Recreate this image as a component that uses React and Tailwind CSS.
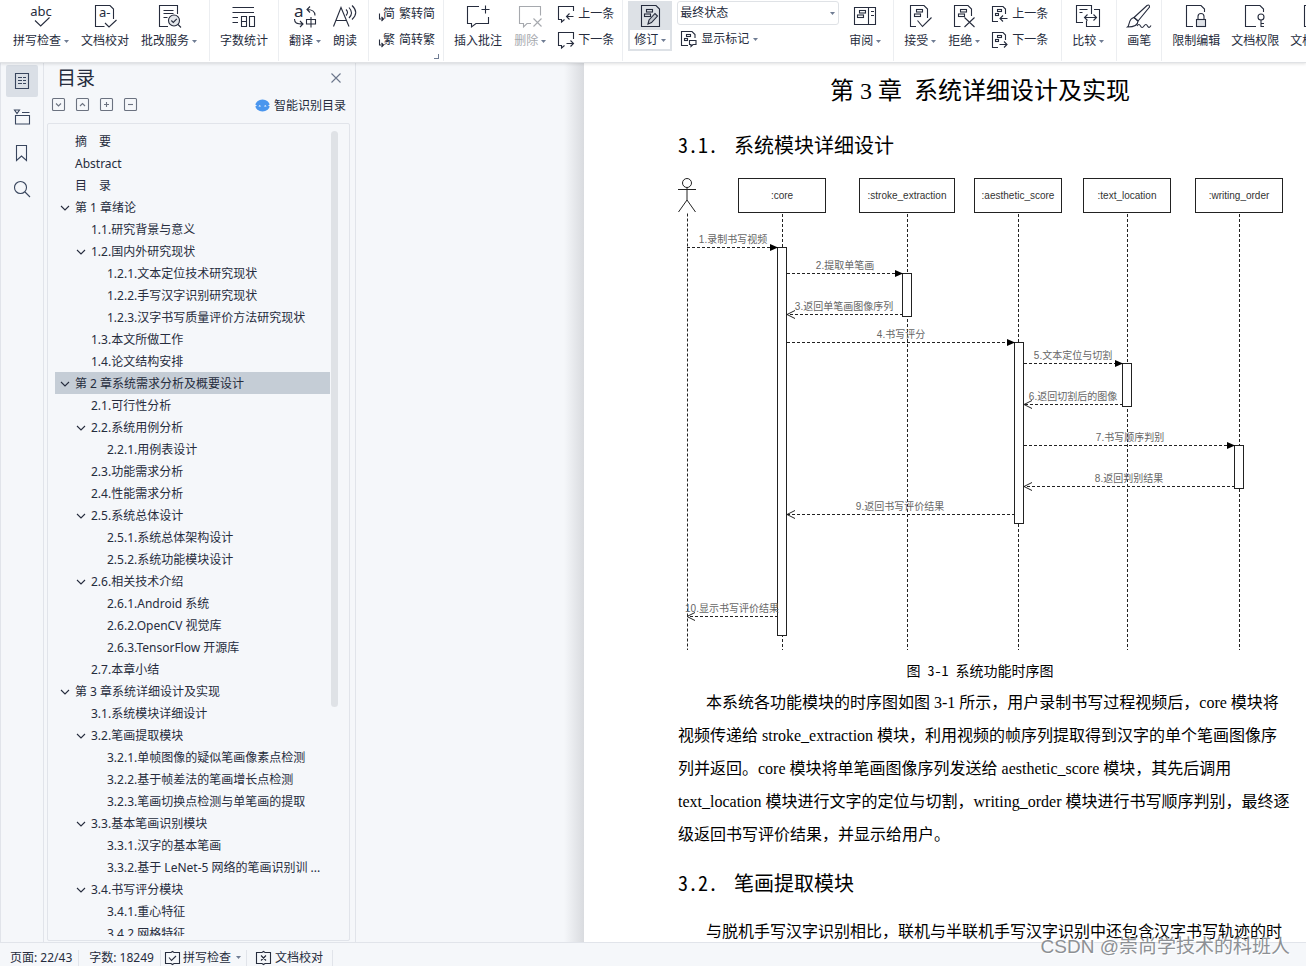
import React from "react";

const UI = "font-['Noto_Sans','Noto_Sans_CJK_SC',sans-serif]";
const HEI = "font-['Noto_Sans_Mono_CJK_SC','Noto_Sans_CJK_SC',sans-serif]";
const SONG = "font-['Liberation_Serif','Noto_Sans_CJK_SC',serif]";

function Svg({ s = 24, h, children, className = "" }) {
  return (
    <svg
      width={s}
      height={h || s}
      viewBox={`0 0 ${s} ${h || s}`}
      fill="none"
      stroke="currentColor"
      strokeWidth="1.1"
      className={`shrink-0 overflow-visible ${className}`}
      aria-hidden="true"
    >
      {children}
    </svg>
  );
}

const Caret = ({ className = "text-[#6f7c93]" }) => (
  <svg width="5" height="3" viewBox="0 0 5 3" className={`shrink-0 ${className}`} aria-hidden="true">
    <path d="M0 0h5L2.5 3z" fill="currentColor" />
  </svg>
);

const Bars = () => (
  <g>
    <rect x="8.5" y="5.5" width="6" height="2.5" />
    <rect x="6.5" y="10" width="6" height="2.5" />
  </g>
);

const SmallBars = () => (
  <g>
    <rect x="5.5" y="3.5" width="4" height="2" />
    <rect x="3.5" y="7.5" width="3" height="2" />
  </g>
);

const icons = {
  spell: (
    <Svg>
      <text x="12" y="12" textAnchor="middle" fontSize="13" fill="currentColor" stroke="none">abc</text>
      <path d="M6 16.500l5.700 5.500L20.500 13.500" />
    </Svg>
  ),
  proof: (
    <Svg>
      <path d="M11.500 22.500h-9v-21H17L20.500 5v10" />
      <text x="6" y="13" fontSize="13" fill="currentColor" stroke="none">a-</text>
      <path d="M12 19l4 4 7.500-7" />
    </Svg>
  ),
  service: (
    <Svg>
      <path d="M11 22.500H2.500v-21h18V10M6.500 6.500h10M6.500 9.500h10M6.500 13.500h4" />
      <circle cx="17" cy="16.500" r="5.500" fill="#e3e6ea" />
      <path d="M14.300 16.500l2 2 3.500-3.700M21 20.500l3 3" />
    </Svg>
  ),
  count: (
    <Svg>
      <path d="M.5 3.500H22M.5 8.500H22M.5 13.500h5.500M.5 18.500h5.500" />
      <path d="M9.500 12.500h5v10h-5zM9.500 17.500h5M17.500 12.500h5v10h-5z" />
    </Svg>
  ),
  translate: (
    <Svg>
      <text x="1" y="13" fontSize="17" fill="currentColor" stroke="none">a</text>
      <path d="M22 11.500C22 7 19 5.500 14 5.500M17 2.500l-3 3 3 3M1.500 15c0 4 2 5 8.500 5M7 17l3 3-3 3" />
      <path d="M13.500 15.500h9v4.500h-9zM18 13v10.500" />
    </Svg>
  ),
  read: (
    <Svg>
      <path d="M.5 22.500L8 3.500l8 19M3 16.500h10.500M13 5.500q3 3 0 6M16 3.500q5 5.500 0 10.500M19 1.500q7.500 7 0 14" />
    </Svg>
  ),
  insert: (
    <Svg>
      <path d="M13 2.500H1.500v17h4V23L10 19.500h12.500V13M19.500 1.500v8M15.500 5.500h8" />
    </Svg>
  ),
  remove: (
    <Svg>
      <path d="M22.500 11.500v-9h-21v17h4V23L9 19.500h4M15.500 14.500l8 8M23.500 14.500l-8 8" />
    </Svg>
  ),
  prevNote: (
    <Svg s={16}>
      <path d="M15.500 5V.5H.5v13h3V16l3-2.500M15.500 10.500h-7M11.500 7.500l-3 3 3 3" />
    </Svg>
  ),
  nextNote: (
    <Svg s={16}>
      <path d="M15.500 7V.5H.5v13h3V16l3-2.500M8.500 11.500h7M12.500 8.500l3 3-3 3" />
    </Svg>
  ),
  track: (
    <Svg>
      <path d="M3.500 1.500H18L21.500 5v17.500h-18z" />
      <Bars />
      <path d="M10 20l1-4 6-6.500 2.500 2.500-6 6.500z" fill="#c3c8cf" />
    </Svg>
  ),
  markup: (
    <Svg s={16}>
      <path d="M7 14.500H.5V.5H11l3 3V7" />
      <SmallBars />
      <path d="M8.500 9.500h6.500v4h-3l-2 2v-2H8.500z" />
    </Svg>
  ),
  pane: (
    <Svg>
      <path d="M1.500 3.500h21v17h-21zM15.500 3.500v17M18 7.500h3M18 11.500h3" />
      <rect x="6.500" y="6.500" width="6" height="2.500" />
      <rect x="4.500" y="11" width="6" height="2.500" />
    </Svg>
  ),
  accept: (
    <Svg>
      <path d="M8 22.500H2.500v-21H16L19.500 5v9" />
      <Bars />
      <path d="M9.500 16.500l5 6 9-9" />
    </Svg>
  ),
  reject: (
    <Svg>
      <path d="M8.500 22.500h-6v-21H16L19.500 5v7" />
      <Bars />
      <path d="M12.500 13.500l10 9.500M22.500 13.500l-10 9.500" />
    </Svg>
  ),
  prevChange: (
    <Svg s={16}>
      <path d="M6 15.500H.5V.5H11l2.500 2.500v5" />
      <SmallBars />
      <path d="M15.500 12.500H8M11 9.500l-3 3 3 3" />
    </Svg>
  ),
  nextChange: (
    <Svg s={16}>
      <path d="M6 15.500H.5V.5H11l2.500 2.500v5" />
      <SmallBars />
      <path d="M7.500 12.500H15M12 9.500l3 3-3 3" />
    </Svg>
  ),
  compare: (
    <Svg>
      <path d="M7 18.500H.5v-17h15V10M3.500 5.500h8M3.500 8.500h3M18 5.500h5.500v17h-13V16.500" />
      <path d="M8.500 13.500h12M11.500 10.500l-3 3 3 3M17.500 10.500l3 3-3 3" />
    </Svg>
  ),
  brush: (
    <Svg>
      <path d="M7 13.500L20 1.500q2.500-1.500 2.500 1.500L11 17z" />
      <path d="M7 13.500L11 17c0 4-4 6-10.500 6C3 21 1 15 7 13.500zM10 22q2-3 3.500 0t3.500 0 3.500 0 3.500-.5" />
    </Svg>
  ),
  lock: (
    <Svg>
      <path d="M9 22.500H2.500v-21H17L20.500 5v3" />
      <path d="M14 15v-2.500a3 3 0 016 0V15" />
      <rect x="12.500" y="15.500" width="9" height="7" fill="#e0e3e8" />
    </Svg>
  ),
  key: (
    <Svg>
      <path d="M13 22.500H2.500v-21H17L20.500 5v3" />
      <circle cx="18" cy="13" r="3" />
      <path d="M18 16v7M18 19.500h3M18 22.500h3" />
    </Svg>
  ),
};

const GlyphIcon = ({ glyph }) => (
  <Svg s={16}>
    <text x="4" y="12" fontSize="12" fill="currentColor" stroke="none">{glyph}</text>
    <path d="M.5 7.500v5.500H4M2.500 11l2 2-2 2" />
  </Svg>
);

function Big({ icon, label, caret, disabled }) {
  return (
    <button
      type="button"
      disabled={disabled}
      className="flex shrink-0 flex-col items-center gap-[5px] pt-1 disabled:text-[#a6a9ae]"
    >
      {icons[icon]}
      <span className="flex h-4 items-center gap-[3px] whitespace-nowrap leading-4">
        {label}
        {caret && <Caret />}
      </span>
    </button>
  );
}

function Small({ icon, label, caret }) {
  return (
    <button type="button" className="flex h-[26px] items-center gap-1 whitespace-nowrap leading-4">
      {icon}
      {label}
      {caret && <Caret />}
    </button>
  );
}

function Group({ className = "", children }) {
  return (
    <div className={`relative flex h-[61px] shrink-0 items-start border-l border-[#eceef1] pl-[10px] ${className}`}>
      {children}
    </div>
  );
}

function Ribbon() {
  return (
    <header className="relative z-10 flex h-[63px] shrink-0 overflow-hidden border-b border-[#e0e2e5] bg-white shadow-[0_1px_3px_rgba(0,0,0,0.12)]">
      <div className="flex h-[61px] shrink-0 items-start gap-3 pl-[13px] pr-3">
        <Big icon="spell" label="拼写检查" caret />
        <Big icon="proof" label="文档校对" />
        <Big icon="service" label="批改服务" caret />
      </div>
      <Group className="pr-[10px]">
        <Big icon="count" label="字数统计" />
      </Group>
      <Group className="gap-3 pr-[11px]">
        <Big icon="translate" label="翻译" caret />
        <Big icon="read" label="朗读" />
      </Group>
      <Group className="pr-[8px]">
        <div className="flex flex-col pt-px">
          <Small icon={<GlyphIcon glyph="简" />} label="繁转简" />
          <Small icon={<GlyphIcon glyph="繁" />} label="简转繁" />
        </div>
        <button type="button" aria-label="中文简繁转换选项" className="absolute bottom-[2px] right-1 h-[5px] w-[5px] border-b border-r border-[#6f7c93]" />
      </Group>
      <Group className="gap-3 pr-[8px]">
        <Big icon="insert" label="插入批注" />
        <Big icon="remove" label="删除" caret disabled />
        <div className="flex flex-col pt-px">
          <Small icon={icons.prevNote} label="上一条" />
          <Small icon={icons.nextNote} label="下一条" />
        </div>
      </Group>
      <div className="flex h-[61px] shrink-0 items-start border-l border-[#eceef1] pl-[5px] pr-3">
        <button type="button" aria-pressed="true" className="mt-px flex h-[50px] w-[44px] flex-col items-center gap-[2px] bg-[#dde1e6] pt-[3px]">
          {icons.track}
          <span className="flex h-[19px] w-10 items-center justify-center gap-[3px] bg-white pt-px leading-4">
            修订
            <Caret />
          </span>
        </button>
        <div className="ml-[5px] mr-[10px] flex w-[162px] flex-col pt-px">
          <div className="relative">
            <select
              aria-label="显示以供审阅"
              className="block h-6 w-full appearance-none rounded-[3px] border border-[#dfe2e6] bg-white pl-[2px] pr-4 leading-[22px] outline-none"
            >
              <option>最终状态</option>
            </select>
            <Caret className="pointer-events-none absolute right-1 top-[11px] text-[#6f7c93]" />
          </div>
          <div className="pl-1 pt-px">
            <Small icon={icons.markup} label="显示标记" caret />
          </div>
        </div>
        <Big icon="pane" label="审阅" caret />
      </div>
      <Group className="gap-3 pr-[13px]">
        <Big icon="accept" label="接受" caret />
        <Big icon="reject" label="拒绝" caret />
        <div className="flex flex-col pt-px">
          <Small icon={icons.prevChange} label="上一条" />
          <Small icon={icons.nextChange} label="下一条" />
        </div>
      </Group>
      <Group className="pr-3">
        <Big icon="compare" label="比较" caret />
      </Group>
      <Group className="pr-[10px]">
        <Big icon="brush" label="画笔" />
      </Group>
      <Group className="gap-[11px]">
        <Big icon="lock" label="限制编辑" />
        <Big icon="key" label="文档权限" />
        <Big icon="lock" label="文档认证" />
      </Group>
    </header>
  );
}

function Rail() {
  const base = "flex h-8 w-8 items-center justify-center rounded-[2px]";
  return (
    <nav aria-label="导航" className="flex w-11 shrink-0 flex-col items-start gap-1 border-x border-[#e1e4ea] pl-[5px] pt-[2px] text-[#39465e]">
      <button type="button" aria-label="目录" className={`${base} bg-[#dadfe6]`}>
        <Svg s={16}>
          <path d="M1.500.5h13v15h-13zM4 4.500h4M4 7.500h4M4 10.500h4M9 4.500h3M9 7.500h3M9 10.500h3" />
        </Svg>
      </button>
      <button type="button" aria-label="章节" className={base}>
        <Svg s={16}>
          <path d="M.5 1h5L3 4.500zM8 3.500h7.500M1.500 6.500h14v8.500h-14z" />
        </Svg>
      </button>
      <button type="button" aria-label="书签" className={base}>
        <Svg s={16}>
          <path d="M2.500.5h10v15L7.500 11l-5 4.500z" />
        </Svg>
      </button>
      <button type="button" aria-label="查找" className={base}>
        <Svg s={16}>
          <circle cx="6.500" cy="6.500" r="6" />
          <path d="M11 11l5 5" />
        </Svg>
      </button>
    </nav>
  );
}

const outline = [
  [0, "摘　要"],
  [0, "Abstract"],
  [0, "目　录"],
  [0, "第 1 章绪论", 1],
  [1, "1.1.研究背景与意义"],
  [1, "1.2.国内外研究现状", 1],
  [2, "1.2.1.文本定位技术研究现状"],
  [2, "1.2.2.手写汉字识别研究现状"],
  [2, "1.2.3.汉字书写质量评价方法研究现状"],
  [1, "1.3.本文所做工作"],
  [1, "1.4.论文结构安排"],
  [0, "第 2 章系统需求分析及概要设计", 1, 1],
  [1, "2.1.可行性分析"],
  [1, "2.2.系统用例分析", 1],
  [2, "2.2.1.用例表设计"],
  [1, "2.3.功能需求分析"],
  [1, "2.4.性能需求分析"],
  [1, "2.5.系统总体设计", 1],
  [2, "2.5.1.系统总体架构设计"],
  [2, "2.5.2.系统功能模块设计"],
  [1, "2.6.相关技术介绍", 1],
  [2, "2.6.1.Android 系统"],
  [2, "2.6.2.OpenCV 视觉库"],
  [2, "2.6.3.TensorFlow 开源库"],
  [1, "2.7.本章小结"],
  [0, "第 3 章系统详细设计及实现", 1],
  [1, "3.1.系统模块详细设计"],
  [1, "3.2.笔画提取模块", 1],
  [2, "3.2.1.单帧图像的疑似笔画像素点检测"],
  [2, "3.2.2.基于帧差法的笔画增长点检测"],
  [2, "3.2.3.笔画切换点检测与单笔画的提取"],
  [1, "3.3.基本笔画识别模块", 1],
  [2, "3.3.1.汉字的基本笔画"],
  [2, "3.3.2.基于 LeNet-5 网络的笔画识别训 ..."],
  [1, "3.4.书写评分模块", 1],
  [2, "3.4.1.重心特征"],
  [2, "3.4.2.网格特征"],
];
const indents = ["pl-[5px]", "pl-[21px]", "pl-[37px]"];

const tools = [
  ["全部展开", "M4 5.500l2.500 2.500L9 5.500"],
  ["全部收起", "M4 8l2.500-2.500L9 8"],
  ["展开", "M4 6.500h5M6.500 4v5"],
  ["收起", "M4 6.500h5"],
];

function OutlinePanel() {
  return (
    <aside className="flex w-[312px] shrink-0 flex-col border-r border-[#e1e4ea] pl-[3px] pr-[5px]">
      <div className="flex h-[30px] items-center justify-between pl-[10px] pr-[9px]">
        <h2 className="text-[19px] leading-7">目录</h2>
        <button type="button" aria-label="关闭" className="text-[#6b768b]">
          <Svg s={10}>
            <path d="M.5.5l9 9M9.500.5l-9 9" />
          </Svg>
        </button>
      </div>
      <div className="flex h-[23px] items-center gap-[11px] pl-[5px] pr-1">
        {tools.map(([label, d]) => (
          <button key={label} type="button" aria-label={label} className="text-[#6b7280]">
            <Svg s={13}>
              <rect x=".5" y=".5" width="12" height="12" rx="1" />
              <path d={d} />
            </Svg>
          </button>
        ))}
        <button type="button" className="ml-auto flex items-center gap-1 pt-[2px] leading-4">
          <svg width="15" height="13" viewBox="0 0 15 13" aria-hidden="true">
            <ellipse cx="7.500" cy="6.500" rx="7.200" ry="6" fill="#4a96ee" />
            <path d="M0 6.500h1.500M13.500 6.500H15" stroke="#f5f7fa" strokeWidth="1" />
            <path d="M3.500 7.500q1.200-2.500 2.400 0zM9.100 7.500q1.200-2.500 2.400 0z" fill="#fff" />
          </svg>
          智能识别目录
        </button>
      </div>
      <div className="mb-px mt-[7px] flex min-h-0 flex-1 items-start gap-px rounded-[2px] border border-[#e1e4ea] pb-1 pl-[7px] pr-[11px] pt-[6px]">
        <ul className="h-full min-w-0 flex-1 overflow-hidden">
          {outline.map(([level, text, open, active]) => (
            <li key={text}>
              <a
                href="#"
                className={`flex h-[22px] items-center gap-[5px] whitespace-nowrap pt-px leading-[21px] ${indents[level]} ${active ? "bg-[#c5cdd6]" : ""}`}
              >
                <Svg s={10} className={open ? "" : "invisible"}>
                  <path d="M1 3l4 4 4-4" />
                </Svg>
                {text}
              </a>
            </li>
          ))}
        </ul>
        <div className="mt-px h-[576px] w-[7px] shrink-0 rounded-full bg-[#dfe2e6]" />
      </div>
    </aside>
  );
}

const lifelines = [
  [104, 61, 148, ":core"],
  [229, 182, 277, ":stroke_extraction"],
  [340, 297, 384, ":aesthetic_score"],
  [449, 406, 493, ":text_location"],
  [561, 518, 605, ":writing_order"],
];
const activations = [
  [100, 71, 388],
  [225, 97, 43],
  [337, 166, 181],
  [445, 187, 43],
  [557, 269, 43],
];
const messages = [
  [9, 100, 71, "1.录制书写视频", 55],
  [109, 225, 97, "2.提取单笔画", 167],
  [225, 109, 138, "3.返回单笔画图像序列", 166],
  [109, 337, 166, "4.书写评分", 223],
  [346, 445, 187, "5.文本定位与切割", 395],
  [445, 346, 228, "6.返回切割后的图像", 395],
  [346, 557, 269, "7.书写顺序判别", 452],
  [557, 346, 310, "8.返回判别结果", 451],
  [337, 109, 338, "9.返回书写评价结果", 222],
  [100, 9, 440, "10.显示书写评价结果", 54],
];

function SequenceDiagram() {
  return (
    <svg
      width="606"
      height="474"
      viewBox="0 0 606 474"
      fill="none"
      stroke="#222"
      role="img"
      aria-label="系统功能时序图"
      className="block overflow-visible font-['Liberation_Sans','Noto_Sans_CJK_SC',sans-serif] text-[10px]"
    >
      <circle cx="9" cy="7" r="4.500" />
      <path d="M9 11.500V24M0 13.500h18M9 24L.5 36M9 24l8.500 12" />
      <path d="M9.500 37.500V474" strokeDasharray="3 2" />
      {lifelines.map(([x, x1, x2, name]) => (
        <g key={name}>
          <path d={`M${x + 0.5} 38V474`} strokeDasharray="3 2" />
          <rect x={x1 - 0.5} y="2.500" width={x2 - x1} height="34" fill="#fff" />
          <text x={x} y="23" textAnchor="middle" fill="#333" stroke="none">{name}</text>
        </g>
      ))}
      {activations.map(([x, y, h]) => (
        <rect key={x} x={x - 0.5} y={y + 0.5} width="9" height={h} fill="#fff" />
      ))}
      {messages.map(([a, b, y, text, cx]) => (
        <g key={text}>
          <path d={`M${a} ${y + 0.5}H${b}`} strokeDasharray="3 2" />
          {b > a ? (
            <path d={`M${b} ${y + 0.5}l-8-3.500v7z`} fill="#000" stroke="none" />
          ) : (
            <path d={`M${b + 8} ${y - 3.5}l-8 4 8 4`} />
          )}
          <text x={cx} y={y - 4} textAnchor="middle" fill="#666" stroke="none">{text}</text>
        </g>
      ))}
    </svg>
  );
}

const paragraph = [
  "本系统各功能模块的时序图如图 3-1 所示，用户录制书写过程视频后，core 模块将",
  "视频传递给 stroke_extraction 模块，利用视频的帧序列提取得到汉字的单个笔画图像序",
  "列并返回。core 模块将单笔画图像序列发送给 aesthetic_score 模块，其先后调用",
  "text_location 模块进行文字的定位与切割，writing_order 模块进行书写顺序判别，最终逐",
  "级返回书写评价结果，并显示给用户。",
];

function SectionTitle({ no, children }) {
  return (
    <h2 className={`flex h-8 items-center text-[20px] leading-8 ${HEI}`}>
      <span className="w-14">{no}</span>
      {children}
    </h2>
  );
}

function Page() {
  return (
    <article className="min-w-0 flex-1 overflow-hidden bg-white pl-[94px] pr-6 text-black">
      <h1 className={`mt-2 text-center text-[24px] leading-10 ${SONG}`}>第 3 章&ensp;系统详细设计及实现</h1>
      <div className="mt-[18px]">
        <SectionTitle no="3.1.">系统模块详细设计</SectionTitle>
      </div>
      <div className="mt-[15px]">
        <SequenceDiagram />
      </div>
      <p className={`mt-2 text-center text-[14px] leading-6 ${HEI}`}>图 3-1 系统功能时序图</p>
      <p className={`mt-1 whitespace-nowrap text-[16px] leading-[33px] ${SONG}`}>
        {paragraph.map((line, i) => (
          <span key={line} className={i === 0 ? "block pl-7" : "block"}>{line}</span>
        ))}
      </p>
      <div className="mt-4">
        <SectionTitle no="3.2.">笔画提取模块</SectionTitle>
      </div>
      <p className={`mt-4 whitespace-nowrap pl-7 text-[16px] leading-[33px] ${SONG}`}>
        与脱机手写汉字识别相比，联机与半联机手写汉字识别中还包含汉字书写轨迹的时
      </p>
    </article>
  );
}

function StatusBar() {
  const item = "flex h-4 items-center whitespace-nowrap border-r border-[#e1e4ea] leading-4";
  return (
    <footer className="relative flex h-6 shrink-0 items-center border-t border-[#e1e4ea] bg-[#f5f7fa] pt-[6px]">
      <span className={`${item} pl-[10px] pr-[6px]`}>页面: 22/43</span>
      <span className={`${item} pl-[10px] pr-[6px]`}>字数: 18249</span>
      <button type="button" className={`${item} gap-[3px] pl-1 pr-[5px]`}>
        <Svg s={15} h={14}>
          <path d="M6 1.500H.5v11H6l1.500 1L9 12.500h5.500v-11H9L7.500.5zM4 6.500l2.500 3L11 5" />
        </Svg>
        拼写检查
        <span className="pl-[2px]"><Caret /></span>
      </button>
      <button type="button" className={`${item} gap-1 px-[9px]`}>
        <Svg s={15} h={14}>
          <path d="M6 1.500H.5v11H6l1.500 1L9 12.500h5.500v-11H9L7.500.5zM5 4.500l5 5M10 4.500l-5 5" />
        </Svg>
        文档校对
      </button>
      <span className="pointer-events-none absolute bottom-[7px] right-4 whitespace-nowrap font-['Liberation_Sans','Noto_Sans_CJK_SC',sans-serif] text-[19px] leading-6 text-[#8d9094] [text-shadow:1px_1px_0_#fff]">
        CSDN @崇尚学技术的科班人
      </span>
    </footer>
  );
}

export default function App() {
  return (
    <div className={`flex h-screen flex-col overflow-hidden bg-[#f5f7fa] text-[12px] text-[#262c3d] ${UI}`}>
      <Ribbon />
      <main className="flex min-h-0 flex-1">
        <Rail />
        <OutlinePanel />
        <div className="flex w-[228px] shrink-0 justify-end">
          <div className="w-5 bg-linear-to-r from-[#f5f7fa] to-[#d9dbdf]" />
        </div>
        <Page />
      </main>
      <StatusBar />
    </div>
  );
}
